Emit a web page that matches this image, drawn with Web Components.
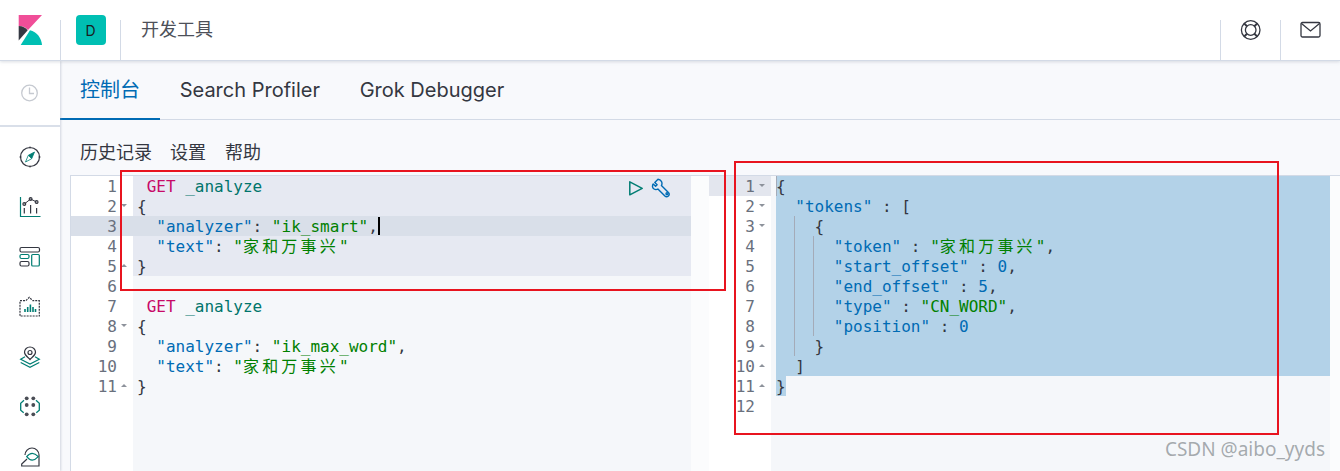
<!DOCTYPE html>
<html lang="zh">
<head>
<meta charset="utf-8">
<title>开发工具</title>
<style>
  html, body { margin: 0; padding: 0; height: 100%; overflow: hidden; background: #f8f9fc; }
</style>
</head>
<body>
<kbn-app></kbn-app>
<script>
const SANS = `Inter, "Noto Sans CJK SC", sans-serif`;
const MONO = `"DejaVu Sans Mono", "Noto Sans CJK SC", monospace`;

class KbnHeader extends HTMLElement {
  constructor() {
    super();
    this.shadowDOM = this.attachShadow({ mode: "open" });
    this.render();
  }

  render() {
    this.shadowDOM.innerHTML = `
      <style>
        :host {
          display: flex;
          height: 60px;
          background: #fff;
          border-bottom: 1px solid #d3dae6;
          box-shadow: 0 1px 3px rgba(152, 162, 179, 0.35);
          position: relative;
          z-index: 2;
          font-family: ${SANS};
        }
        .cell { display: flex; align-items: center; justify-content: center; width: 59px; }
        .cell.logo { width: 60px; }
        .sep { align-self: flex-end; width: 1px; height: 40px; background: #d3dae6; }
        .badge {
          width: 30px; height: 30px; border-radius: 4px; background: #00bfb3;
          display: flex; align-items: center; justify-content: center;
          font-size: 14px; color: #1a1c21;
        }
        .title { flex: 1; padding-left: 20px; font-size: 18px; color: #4d5059; line-height: 59px; }
        svg { display: block; }
      </style>
      <div class="cell logo">
        <svg width="24" height="30" viewBox="0 0 24 30">
          <path d="M.7 0H24L10 15C7.8 12.6 4.600 11 .7 11z" fill="#f04e98"/>
          <path d="M.7 11C4.600 11 7.800 12.600 9.700 15.300L.7 25.500z" fill="#343741"/>
          <path d="M2.700 30L12 15.300C18.800 17 23.500 23 24 30z" fill="#00bfb3"/>
        </svg>
      </div>
      <div class="sep"></div>
      <div class="cell"><div class="badge">D</div></div>
      <div class="sep"></div>
      <div class="title">开发工具</div>
      <div class="sep"></div>
      <div class="cell">
        <svg width="22" height="22" viewBox="0.3 0 22 22" fill="none" stroke="#343741" stroke-width="1.300">
          <circle cx="11" cy="11" r="9.300"/>
          <circle cx="11" cy="11" r="5.300"/>
          <path d="M4.400 4.400l2.900 2.900M17.600 4.400l-2.900 2.900M4.400 17.600l2.900-2.900M17.600 17.600l-2.900-2.900" stroke-width="2"/>
        </svg>
      </div>
      <div class="sep"></div>
      <div class="cell">
        <svg width="22" height="18" viewBox="0.5 0 22 18" fill="none" stroke="#343741" stroke-width="1.300">
          <rect x="1.500" y="1.500" width="19" height="14.500" rx="1.500"/>
          <path d="M2 2.500l9 7.500 9-7.500"/>
        </svg>
      </div>
    `;
  }
}

const NAV_ICONS = {
  compass: `
    <circle cx="11" cy="11" r="9.500"/>
    <path d="M11 0.500v2M11 19.500v2M0.500 11h2M19.500 11h2" stroke-width="1"/>
    <path d="M15.500 6L12.700 12.700 9.300 9.300z" fill="#017d73" stroke="#017d73" stroke-width=".8"/>
    <path d="M6.500 16L9.300 9.300 12.700 12.700z" fill="#fff" stroke="#017d73" stroke-width=".8"/>`,
  chart: `
    <path d="M1.500 1v19.500h20" stroke="#017d73"/>
    <path d="M5.300 8L11.600 3l6 3" stroke-width="1"/>
    <circle cx="5.300" cy="8" r="1.400"/><circle cx="11.600" cy="3" r="1.400"/><circle cx="17.600" cy="6" r="1.400"/>
    <path d="M5.300 12v5.500M11.600 9v8.500M17.600 12v5.500"/>`,
  dashboard: `
    <rect x="1" y="1.500" width="19.500" height="4.500" rx="1.500"/>
    <rect x="1" y="8.500" width="9" height="4" rx="1.500" stroke="#017d73"/>
    <rect x="1" y="15.500" width="9" height="4.500" rx="1.500"/>
    <rect x="12.700" y="8.500" width="7.600" height="11.500" rx="1" stroke="#017d73"/>`,
  canvas: `
    <path d="M1 4.700h5.800l3.500-3.400 3.500 3.400h6.500V20H1z" stroke-dasharray="2 1"/>
    <path d="M6 16v-3M8.700 16v-5M11.400 16V8.500M14 16v-5M16.500 16v-3" stroke="#017d73" stroke-width="1.600"/>`,
  maps: `
    <path d="M11 13.500C9 11.200 5.500 9.500 5.500 6.300 5.500 3.200 8 1 11 1s5.500 2.200 5.500 5.300c0 3.200-3.500 4.900-5.500 7.200z"/>
    <circle cx="11" cy="6.500" r="2"/>
    <path d="M6 10.800l-4.300 2.500L11 18l9.300-4.700L16 10.800" stroke="#017d73"/>
    <path d="M1.700 16.500L11 21.300l9.300-4.800" stroke="#017d73"/>`,
  ml: `
    <g fill="#4a4d55" stroke="none">
      <circle cx="7.700" cy="2.300" r="1.900"/><circle cx="14.300" cy="2.300" r="1.900"/>
      <circle cx="7.700" cy="9" r="1.900"/><circle cx="14.300" cy="9" r="1.900"/>
      <circle cx="7.700" cy="18.300" r="1.900"/><circle cx="14.300" cy="18.300" r="1.900"/>
    </g>
    <path d="M5 4.300L1.700 7.300v7l3 2.500M17 4.300l3.300 3v7l-3 2.500" stroke="#017d73" stroke-width="1.300"/>`,
  graph: `
    <path d="M6 9a7 7 0 0 1 14 0v11H2.700v-2L8 13"/>
    <path d="M7.700 10.700Q13 4 19.300 10.700 13 17.500 7.700 10.700z" stroke="#017d73"/>`,
};

class NavIcon extends HTMLElement {
  constructor() {
    super();
    this.shadowDOM = this.attachShadow({ mode: "open" });
  }

  connectedCallback() {
    this.shadowDOM.innerHTML = `
      <style>
        :host { display: flex; height: 50px; width: 60px; align-items: center; justify-content: center; }
        svg { display: block; }
      </style>
      <svg width="22" height="22" viewBox="0 0 22 22" fill="none" stroke="#343741" stroke-width="1.200">
        ${NAV_ICONS[this.getAttribute("icon")]}
      </svg>
    `;
  }
}

class KbnSidenav extends HTMLElement {
  constructor() {
    super();
    this.shadowDOM = this.attachShadow({ mode: "open" });
    this.render();
  }

  render() {
    this.shadowDOM.innerHTML = `
      <style>
        :host {
          display: block;
          width: 60px;
          flex: none;
          background: #fff;
          box-shadow: 1px 0 2px rgba(152, 162, 179, 0.4);
          position: relative;
          z-index: 1;
        }
        .recent {
          height: 64px;
          display: flex; align-items: center; justify-content: center;
          border-bottom: 2px solid #d9dfe9;
        }
        .items { padding-top: 5px; }
      </style>
      <div class="recent">
        <svg width="18" height="18" viewBox="0.5 0 18 18" fill="none" stroke="#c6cad1" stroke-width="1.300">
          <circle cx="9" cy="9" r="7.800"/>
          <path d="M9 3.500V9.500h4.500"/>
        </svg>
      </div>
      <div class="items"><slot></slot></div>
    `;
  }
}

class DevTabs extends HTMLElement {
  constructor() {
    super();
    this.shadowDOM = this.attachShadow({ mode: "open" });
    this.render();
  }

  render() {
    this.shadowDOM.innerHTML = `
      <style>
        :host {
          display: flex;
          height: 58px;
          border-bottom: 1px solid #d3dae6;
          font-family: ${SANS};
          font-size: 20px;
          color: #343741;
        }
        .tab { padding: 0 20px; line-height: 59px; height: 58px; box-sizing: border-box; }
        .tab + .tab { margin-left: -0.3px; }
        .active { color: #006bb4; border-bottom: 2px solid #006bb4; height: 59px; }
      </style>
      <div class="tab active">控制台</div>
      <div class="tab">Search Profiler</div>
      <div class="tab">Grok Debugger</div>
    `;
  }
}

class ConsoleMenu extends HTMLElement {
  constructor() {
    super();
    this.shadowDOM = this.attachShadow({ mode: "open" });
    this.render();
  }

  render() {
    this.shadowDOM.innerHTML = `
      <style>
        :host {
          display: flex;
          gap: 18px;
          height: 55px;
          box-sizing: border-box;
          padding: 20px 0 0 20px;
          font-family: ${SANS};
          font-size: 18px;
          line-height: 26px;
          color: #343741;
        }
        span:last-child { margin-left: 1px; }
      </style>
      <span>历史记录</span><span>设置</span><span>帮助</span>
    `;
  }
}

class CodePane extends HTMLElement {
  constructor() {
    super();
    this.shadowDOM = this.attachShadow({ mode: "open" });
  }

  set config(config) {
    this._config = config;
    this.render();
  }

  render() {
    const { lines, gutterRight, scrollWidth, codeLeft, actions, guides } = this._config;
    const gutter = lines.map((line, i) => `<div class="num ${line.gutterActive || ""}"><span>${i + 1}</span><i class="${line.fold || ""}"></i></div>`).join("");
    const code = lines.map((line) => `<div class="line ${line.state || ""}">${line.html}</div>`).join("");
    this.shadowDOM.innerHTML = `
      <style>
        :host {
          display: flex;
          min-width: 0;
          font-family: ${MONO};
          font-size: 16px;
          line-height: 22px;
          color: #343741;
        }
        .gutter { width: 62px; flex: none; background: #fff; color: #69707d; }
        .num { height: 20px; display: flex; align-items: flex-start; justify-content: flex-end; padding-right: ${gutterRight}px; position: relative; }
        .num.active { background: #d9dfe9; }
        .num.soft { background: #e3e6ee; }
        .num i { position: absolute; right: 6px; top: 8px; width: 0; height: 0; border: 3px solid transparent; }
        .num i.down { border-top: 3.500px solid #8d929b; border-bottom: 0; }
        .num i.up { border-bottom: 3.500px solid #8d929b; border-top: 0; }
        .code { flex: 1; min-width: 0; background: #f5f7fa; position: relative; }
        .line { height: 20px; padding-left: ${codeLeft}px; white-space: pre; }
        .line.selected { background: #e6e9f2; }
        .line.current { background: #d9dfe9; }
        .line.output { background: #b3d2e8; margin-left: ${codeLeft}px; padding-left: 0; }
        .line.tail { background: none; }
        .line.tail b { font-weight: normal; background: #b3d2e8; display: inline-block; width: 10px; height: 20px; }
        .scroll { width: ${scrollWidth}px; flex: none; background: #fbfcfd; }
        .kw { color: #c80a68; }
        .url { color: #00756c; }
        .key { color: #006bb4; }
        .str { color: #008000; }
        .num-v { color: #006bb4; }
        .cjk { letter-spacing: 3.2px; }
        .caret { display: inline-block; width: 2px; height: 18px; background: #000; vertical-align: -3px; margin-right: -2px; }
        .actions { position: absolute; top: 2px; right: 19px; display: flex; gap: 7px; align-items: center; }
        .actions svg { display: block; }
        .guide { position: absolute; width: 1px; background: #a4abb8; }
      </style>
      <div class="gutter">${gutter}</div>
      <div class="code">
        ${code}
        ${guides ? guides.map((g) => `<div class="guide" style="left:${g.x}px;top:${g.top}px;height:${g.height}px"></div>`).join("") : ""}
        ${actions ? `
        <div class="actions">
          <svg width="16" height="18" viewBox="0 0 16 18" fill="none" stroke="#017d73" stroke-width="1.500"><path d="M1.800 2.800L14.200 9.300 1.800 15.800z" stroke-linejoin="round"/></svg>
          <svg width="21" height="20" viewBox="0 0 21 20" fill="none" stroke="#006bb4" stroke-width="1.400" stroke-linejoin="round"><path d="M7 1.200L3.800 4.400l2.300 2.300-1.500 1.500-2.400-2.300C1 7.800 1.400 10 3 11c1.300.8 2.800.7 3.900 0l7 7c1 1 2.300 1 3.500 0 1.100-1.100 1.100-2.500 0-3.500l-7-6.900c.7-1.300.8-2.800 0-4.200C9.500 1.800 8.300 1.200 7 1.200z"/><circle cx="16" cy="15.800" r="1"/></svg>
        </div>` : ""}
      </div>
      <div class="scroll"></div>
    `;
  }
}

class CodeEditor extends HTMLElement {
  constructor() {
    super();
    this.shadowDOM = this.attachShadow({ mode: "open" });
    this.shadowDOM.innerHTML = `
      <style>
        :host {
          display: grid;
          grid-template-columns: 638px 631px;
          margin-left: 10px;
          height: 295px;
          border-top: 1px solid #d3dae6;
          border-left: 1px solid #d3dae6;
        }
      </style>
      <slot></slot>
    `;
  }
}

class MarkBox extends HTMLElement {
  constructor() {
    super();
    this.shadowDOM = this.attachShadow({ mode: "open" });
    this.shadowDOM.innerHTML = `
      <style>
        :host {
          display: block;
          position: absolute;
          box-sizing: border-box;
          border: 2px solid #e8141f;
          pointer-events: none;
          z-index: 5;
        }
      </style>
    `;
  }
}

class WaterMark extends HTMLElement {
  constructor() {
    super();
    this.shadowDOM = this.attachShadow({ mode: "open" });
    this.shadowDOM.innerHTML = `
      <style>
        :host {
          position: absolute;
          right: 15px;
          top: 436px;
          z-index: 5;
          font: 19px/26px "Noto Sans", "Open Sans", sans-serif;
          color: rgba(130, 135, 140, 0.7);
        }
      </style>
      <slot></slot>
    `;
  }
}

class KbnApp extends HTMLElement {
  constructor() {
    super();
    this.shadowDOM = this.attachShadow({ mode: "open" });
    this.render();
  }

  render() {
    this.shadowDOM.innerHTML = `
      <style>
        :host {
          display: flex;
          flex-direction: column;
          height: 471px;
          overflow: hidden;
          position: relative;
          background: #f8f9fc;
        }
        .body { display: flex; flex: 1; min-height: 0; }
        main { flex: 1; min-width: 0; }
        .left { left: 120px; top: 170px; width: 606px; height: 121px; }
        .right { left: 734px; top: 161px; width: 545px; height: 274px; }
      </style>
      <kbn-header></kbn-header>
      <div class="body">
        <kbn-sidenav>
          <nav-icon icon="compass"></nav-icon>
          <nav-icon icon="chart"></nav-icon>
          <nav-icon icon="dashboard"></nav-icon>
          <nav-icon icon="canvas"></nav-icon>
          <nav-icon icon="maps"></nav-icon>
          <nav-icon icon="ml"></nav-icon>
          <nav-icon icon="graph"></nav-icon>
        </kbn-sidenav>
        <main>
          <dev-tabs></dev-tabs>
          <console-menu></console-menu>
          <code-editor>
            <code-pane id="request"></code-pane>
            <code-pane id="response"></code-pane>
          </code-editor>
        </main>
      </div>
      <mark-box class="left"></mark-box>
      <mark-box class="right"></mark-box>
      <water-mark>CSDN @aibo_yyds</water-mark>
    `;

    const cjk = `<span class="cjk">家和万事兴</span>`;
    const request = [
      { html: ` <span class="kw">GET</span> <span class="url">_analyze</span>`, state: "selected" },
      { html: `{`, state: "selected", fold: "down" },
      { html: `  <span class="key">"analyzer"</span>: <span class="str">"ik_smart"</span>,<span class="caret"></span>`, state: "current", gutterActive: "active" },
      { html: `  <span class="key">"text"</span>: <span class="str">"${cjk}"</span>`, state: "selected" },
      { html: `}`, state: "selected", fold: "up" },
      { html: ` ` },
      { html: ` <span class="kw">GET</span> <span class="url">_analyze</span>` },
      { html: `{`, fold: "down" },
      { html: `  <span class="key">"analyzer"</span>: <span class="str">"ik_max_word"</span>,` },
      { html: `  <span class="key">"text"</span>: <span class="str">"${cjk}"</span>` },
      { html: `}`, fold: "up" },
    ];
    const out = (html, fold) => ({ html, fold, state: "output" });
    const response = [
      { ...out(`{`, "down"), gutterActive: "soft" },
      out(`  <span class="key">"tokens"</span> : [`, "down"),
      out(`    {`, "down"),
      out(`      <span class="key">"token"</span> : <span class="str">"${cjk}"</span>,`),
      out(`      <span class="key">"start_offset"</span> : <span class="num-v">0</span>,`),
      out(`      <span class="key">"end_offset"</span> : <span class="num-v">5</span>,`),
      out(`      <span class="key">"type"</span> : <span class="str">"CN_WORD"</span>,`),
      out(`      <span class="key">"position"</span> : <span class="num-v">0</span>`),
      out(`    }`, "up"),
      out(`  ]`, "up"),
      { html: `<b>}</b>`, state: "output tail", fold: "up" },
      { html: ` ` },
    ];
    this.shadowDOM.getElementById("request").config = {
      lines: request, gutterRight: 16, scrollWidth: 18, codeLeft: 4, actions: true,
    };
    this.shadowDOM.getElementById("response").config = {
      lines: response, gutterRight: 16, scrollWidth: 10, codeLeft: 5,
      guides: [
        { x: 5, top: 0, height: 20 },
        { x: 23, top: 40, height: 140 },
        { x: 42, top: 60, height: 100 },
      ],
    };
  }
}

customElements.define("kbn-header", KbnHeader);
customElements.define("nav-icon", NavIcon);
customElements.define("kbn-sidenav", KbnSidenav);
customElements.define("dev-tabs", DevTabs);
customElements.define("console-menu", ConsoleMenu);
customElements.define("code-pane", CodePane);
customElements.define("code-editor", CodeEditor);
customElements.define("mark-box", MarkBox);
customElements.define("water-mark", WaterMark);
customElements.define("kbn-app", KbnApp);
</script>
</body>
</html>
